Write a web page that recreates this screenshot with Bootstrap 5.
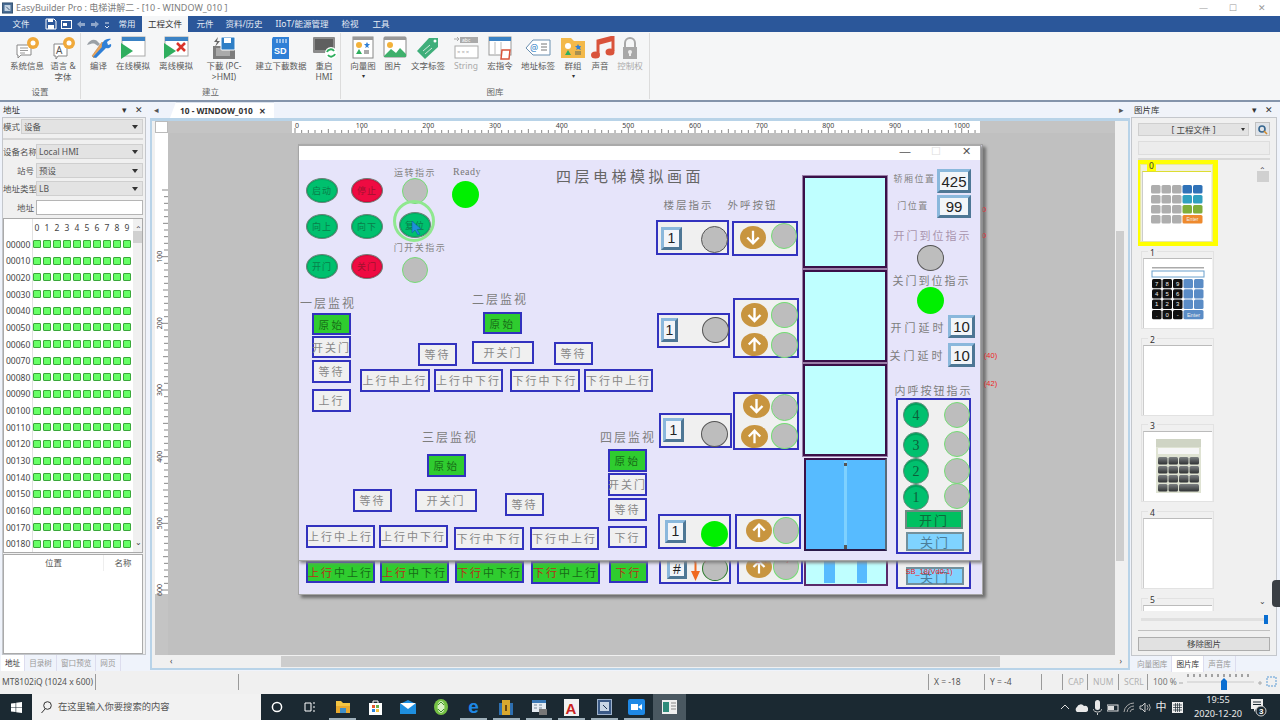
<!DOCTYPE html>
<html lang="zh">
<head>
<meta charset="utf-8">
<title>EasyBuilder Pro</title>
<link href="https://cdn.jsdelivr.net/npm/bootstrap@5.3.0/dist/css/bootstrap.min.css" rel="stylesheet">
<style>
html,body{margin:0;height:720px;overflow:hidden}
body{width:1280px;font:8.5px/11px "Noto Sans","Noto Sans CJK SC",sans-serif;color:#444;background:#f0f0f0}
.ttl{height:16px;background:#fff;color:#7d7d7d;font-size:9px;line-height:16px}
.ttl svg{margin:2px 3px 0 2px}
.wbtns span{width:29px;text-align:center;color:#999;font-size:9px}
.tabbar{height:16px;background:#2b579a;color:#e6ecf5;line-height:16px;font-size:8.5px}
.tabbar>div{text-align:center}
.tabbar .on{background:#f5f6f7;color:#333;width:46px}
.t42{width:42px}.t68{width:70px}.t30{width:30px}.t34{width:34px}.t44{width:44px}.t72{width:72px}.t24{width:24px}.t38{width:38px}
.qat{gap:4px;align-items:center;padding-left:3px}
.ribbon{height:70px;background:#f5f6f7;border-bottom:2px solid #8494ab;color:#5a5a5a}
.rgroup{border-right:1px solid #dcdcdc;height:66px;margin-top:1px}
.ritem{height:53px;text-align:center;flex:none;line-height:11px;padding-top:3px}
.ritem svg{display:block;margin:0 auto;height:24px;width:28px}
.rlabel{text-align:center;line-height:11px;color:#666;margin-bottom:5px}
.caret{color:#333;font-size:6px;line-height:10px}
.dis{color:#aaa}
.g1pad{padding-left:9px}
.w36{width:36px}.w35{width:35px}.w34{width:34px}.w52{width:52px}.w44{width:44px}.w70{width:70px}.w16{width:16px}.w38{width:38px}.w24{width:24px}.w46{width:46px}.w30{width:30px}.w32{width:32px}.w22{width:22px}
.gw81{width:81px}.gw260{width:260px}.gw309{width:309px}
.hmi-in{margin-left:-6px;width:28px}
.hmi-ic{margin-left:-6px!important}
.wspace{height:569px;background:#eff3fb}
.lpanel{width:148px;flex:none}
.phead{height:15px;line-height:15px;padding:0 5px 0 3px;color:#333;background:#f0f3f9}
.pbody{background:#f0f0f0;border:1px solid #c4c7cc;margin:0 2px}
.lbody{height:538px;padding:1px 2px 0 0;width:144px;margin:0 1px 0 2px}
.frow{height:15px;margin-bottom:3.7px;align-items:center}
.frow label{width:31px;text-align:right;margin-right:2px;flex:none;white-space:nowrap;color:#555}
.frow label.lab-s{width:16px}
.combo{flex:1;height:15px;background:#e3e3e3;border:1px solid #cfcfcf;line-height:13px;padding-left:2px;position:relative;color:#555}
.combo:after{content:"";position:absolute;right:4px;top:5px;border:3px solid transparent;border-top:4px solid #333}
.inp{background:#fff;border-color:#b5b5b5}
.inp:after{display:none}
.fsep{border-top:2px solid #d6d6d6;margin:0 0 4px}
.fr1{margin-bottom:4px}
.gridbox{height:335px;background:#fff;border:1px solid #aaa;margin-top:-1px;position:relative;overflow:hidden}
.gcol{width:130px;overflow:hidden;height:333px}
.ghead{height:17px;padding-left:28px;line-height:18px}
.ghead span{width:10px;text-align:center;flex:none;color:#444}
.grow{height:16.67px;align-items:center}
.grow span{width:29px;padding-left:2px;flex:none;color:#444}
.grow i{display:block;width:8px;height:8px;margin-right:2px;background:#66ff66;border:1px solid #3aa83a;border-radius:1px;flex:none}
.gline{width:1px;background:#e2e2e2;position:absolute;left:28px;top:0;bottom:0}
.gscroll{width:9px;background:#f0f0f0;position:relative;height:333px;margin-left:auto}
.gthumb{position:absolute;left:0;top:12px;width:9px;height:12px;background:#d0d0d0}
.tbbox{height:100px;background:#fff;border:1px solid #aaa;margin-top:1px;color:#555;text-align:center}
.tbhead{height:16px;line-height:16px}
.tbhead div:first-child{width:100px;border-right:1px solid #eee}
.tbhead div:last-child{width:38px}
.bots{height:16px;line-height:16px;color:#999;font-size:7.6px}
.bots span{padding:0 4px;border-right:1px solid #dde}
.bots .on{background:#fff;color:#333}
.lbots{padding-left:1px}
.rbots{padding-left:2px}
.cframe{width:980px;flex:none;margin-left:2px;height:569px}
.ctab{height:16px;line-height:16px;position:relative}
.ctab .doc{position:absolute;left:20px;top:0;width:104px;height:16px;background:#fff;font-size:8.3px;font-weight:700;color:#333;padding-left:10px;border-top:1px solid #dce3ee;clip-path:polygon(6px 0,100% 0,100% 100%,0 100%)}
.arrl{color:#555;margin-left:4px}
.arrr{position:absolute;right:6px;top:0;color:#555}
.cinner{border:2px solid #b8d3e8;border-top-width:3px;height:552px;background:#f0f0f0;padding-left:3px}
.rulrow{height:12px}
.corner{width:13px;background:#fff;border:1px solid #bbb}
.rulline{display:block;background:#c4c4c4;flex:none}
.hmi{width:947px;height:522px;background:#c0c0c0;position:relative;overflow:hidden;flex:none}
.vs{width:10px;background:#f0f0f0;height:522px;position:relative}
.vs i{position:absolute;left:1px;top:98px;width:8px;height:330px;background:#cdcdcd}
.hs{height:11px;margin:1px 0 0 13px;width:957px;background:#f0f0f0;position:relative}
.hs i{position:absolute;left:113px;top:0;width:719px;height:11px;background:#cdcdcd}
.hs .chev{top:1px;left:2px}
.hs .chev.rgt{left:auto;right:3px}
.rpanel{width:147px;flex:none;margin-left:1px}
.rbody{height:539px;margin:0 1px 0 0;padding:5px 6px 0 6px;position:relative}
.rcombo{height:13px;width:112px;text-align:center;background:#e3e3e3;border:1px solid #cfcfcf;line-height:11px;position:relative;font-size:8.5px}
.rcombo:after{content:"";position:absolute;right:3px;bottom:2px;border:2px solid transparent;border-top:3px solid #333}
.rbtn{width:15px;height:14px;margin:-1px 0 0 6px;background:#dfe3e8;border:1px solid #c0c0c0}
.rbox{height:14px;background:#ececec;border:1px solid #ddd;margin-top:5px}
.plist{height:453px;margin-top:3px;border-top:2px solid #d8d8d8;position:relative}
.listc{width:118px;height:451px;overflow:hidden}
.pit{width:73px;height:78px;margin:0 0 8.7px 3px;border:1px solid #e2e2e2;padding-left:1px;position:relative}
.pit span{position:absolute;left:6px;top:-4px;background:#f0f0f0;padding:0 2px;line-height:10px;color:#333}
.pth{position:absolute;left:1px;top:6px;width:69px;height:70px;background:#fff;border-top:1px solid #bbb;border-left:1px solid #ccc}
.pyel{width:80px;height:86px;background:#ffff00;margin-bottom:5px;padding:4px 0 0 2px}
.pyel .pit{margin:0;height:78px;border-color:#e8e8a0;background:#f0f0e0}
.pyel .pit span{background:#ffff00}
.pyel .pth{border-top:1px solid #dd3}
.vsb{width:12px;margin-left:auto;position:relative;background:#f0f0f0;margin-right:1px;height:451px}
.vsb i{position:absolute;left:0;top:11px;width:12px;height:11px;background:#d0d0d0}
.chev{position:absolute;left:2px;font-size:8px;line-height:8px;color:#444}
.chev.ctop{top:6px}.chev.cbot{bottom:6px}
.pslide{height:17px;position:relative}
.pslide:before{content:"";position:absolute;left:3px;right:3px;top:7px;height:3px;background:#e0e0e0}
.pslide i{position:absolute;right:2px;top:4px;width:4px;height:9px;background:#0a6ed1}
.rmv{height:14px;line-height:12px;text-align:center;margin-top:6px;background:#e1e1e1;border:1px solid #adadad;color:#444}
.rsep{border-top:1px solid #c0c0c0;margin-top:2px}
.handle{position:absolute;left:1272px;top:580px;width:8px;height:27px;background:#3b3f44;border-radius:4px 0 0 4px}
.stbar{height:23px;background:#f0f0f0;line-height:23px;color:#555;font-size:8.5px}
.stbar>div{border-right:1px solid #9a9a9a;height:16px;line-height:16px;margin-top:3px;flex:none;padding-left:5px;white-space:nowrap}
.sdim{color:#b0b0b0}
.zoomb{position:relative;width:92px;border:0!important;color:#777}
.zsvg{position:absolute;left:30px;top:-3px}
.s96{width:96px;padding-left:2px!important}.s143{width:143px}.s690{width:690px}.s56{width:56px}.s57{width:57px}.s21{width:21px}.s25{width:25px}.s31{width:31px}.s29{width:29px}
.taskbar{height:26px;background:#1b2932;color:#eaeaea;font-size:9px;line-height:12px}
.wlogo{width:32px;align-items:center;justify-content:center}
.sbox{width:229px;background:#f2f2f2;color:#555;font-size:9.3px;line-height:26px;padding-left:8px;gap:6px;align-items:center}
.tslot{width:32.7px;height:26px;flex:none;align-items:center;justify-content:center;position:relative}
.tslot.u:after{content:"";position:absolute;left:3px;right:3px;bottom:0;height:2px;background:#9fb0ba}
.tslot.act{background:#4a5861}
.elogo{color:#1e88e5;font:700 19px/20px "Liberation Sans",sans-serif}
.tray{margin-left:auto;align-items:center;padding-right:11px}
.tray>*{flex:none}
.trs{width:16px;display:flex;justify-content:center;align-items:center;font-size:11px}
.clock{width:62px;margin-left:2px;text-align:center;line-height:14px;font-size:9.2px}
.notif{width:20px}
.hwin{position:absolute;left:130px;top:11px;width:683px;background:#e6e4fa;border:1px solid #a5a5a5}
.hback{height:451px;box-shadow:3px 3px 3px #6f6f6f;width:685px}
.hfront{height:417px;box-shadow:2px 2px 3px #808080;border-top:2px solid #aaa}
.hbar{height:14px;background:#fff}
.a{position:absolute;display:flex;align-items:center;justify-content:center;white-space:nowrap;font-family:"Noto Sans CJK SC","Noto Sans",sans-serif;color:#7d7d7d}
.mon{background:#f0f0f0;border:2px solid #3232be;font-size:11px;letter-spacing:2px;color:#888}
.mong{background:#2fcc2f;color:#176b17;letter-spacing:2.5px;font-size:10.5px}
.mong2{background:#2fcc2f;color:#176b17}
.bt{color:#b5321a}
.oval{border-radius:50%;font-size:9px;letter-spacing:1px;border:1px solid #6f7f78;box-shadow:inset 0 0 0 1px rgba(0,0,0,.12)}
.og{background:#00c06e;color:#0a7d4a}
.or{background:#ef0b42;color:#a0122e}
.lamp{border-radius:50%;background:#bdbdbd;border:1px solid #75dc75}
.lampd{border-color:#555}
.lampon{background:#00f000;border:0}
.fbox{background:#f0f0f0;border:2px solid #3232be}
.dbox{background:#f2f5f9;border:3px solid;border-color:#8ab8dc #4e7795 #4e7795 #8ab8dc;color:#222;font-family:"Liberation Sans",sans-serif;font-size:14px}
.big{font-size:15px}
.orb{background:#c8953f;border-radius:50%}
.cell{background:#bfffff;border:2px solid #3a1048;outline:1px solid #9a7fa8}
.back-cell{background:#bfffff;border:2px solid #5a2a6a}
.back-bar{background:#57bbff}
.tg{font-size:15px;letter-spacing:3.5px;color:#666}
.t12{font-size:12px;letter-spacing:2px}
.t9{font-size:9px;letter-spacing:1.5px;color:#858585}
.t10{font-size:10.5px;letter-spacing:2px}
.t11{font-size:11px;letter-spacing:2px}
.t11x{font-size:11px;letter-spacing:3px}
.pur{color:#a893ac}
.ready{font-family:"Liberation Serif",serif;font-size:10px;letter-spacing:.5px;color:#777}
.cbtn{border-radius:50%;background:#00c06e;border:1px solid #5c8a76;color:#0d5e3a;font-family:"Liberation Serif",serif;font-size:14px;box-shadow:inset 0 2px 0 rgba(0,0,0,.15)}
.pgreen{background:#00c060;border:2px solid #6c8a80;color:#0d6a3c;font-size:13px;letter-spacing:2px}
.pblue{background:#7fd3ff;border:2px solid #72909c;color:#4b7d99;font-size:13px;letter-spacing:2px}
.red{color:#e22;font-size:7.5px;font-family:"Liberation Sans",sans-serif}
.ring{border-radius:50%;border:3px solid #8fe88f;background:transparent}
.blue{background:#57bbff;border-top:2px solid #3a1048;border-left:2px solid #3a1048;border-right:2px solid #5a6a7a;border-bottom:2px solid #2a1a48}
.gapb{background:#7ed1ff}
.cdot{background:#555}
.wctl{font-size:11px;color:#555;font-family:"Liberation Sans",sans-serif}
.wdim{color:#ddd}
</style>
</head>
<body>
<div class="ttl d-flex">
  <svg width="11" height="12" viewBox="0 0 13 13"><rect x=".5" y=".5" width="12" height="12" fill="#4a6d94" stroke="#2b4a6b"/><rect x="3" y="3" width="7" height="7" fill="#c8d6e5"/><path d="M5 5l4 4" stroke="#2b4a6b"/></svg>
  <span>EasyBuilder Pro : 电梯讲解二 - [10 - WINDOW_010 ]</span>
  <div class="wbtns ms-auto d-flex me-1"><span>—</span><span>☐</span><span>✕</span></div>
</div>
<div class="tabbar d-flex">
  <div class="t42">文件</div>
  <div class="t68 d-flex qat">
    <svg width="12" height="12" viewBox="0 0 12 12"><path d="M1 1h8l2 2v8H1z" fill="none" stroke="#fff"/><path d="M3 1h5v3H3zM3 7h6v4H3z" fill="#fff"/></svg>
    <svg width="11" height="11" viewBox="0 0 11 11"><rect x=".5" y="1.5" width="10" height="8" fill="none" stroke="#fff"/><path d="M2 4h4v3H2z" fill="#fff"/></svg>
    <svg width="10" height="10" viewBox="0 0 10 10"><path d="M1 5l4-3v2h4v3H5v2z" fill="#8ea6c9"/></svg>
    <svg width="10" height="10" viewBox="0 0 10 10"><path d="M9 5L5 2v2H1v3h4v2z" fill="#8ea6c9"/></svg>
    <svg width="6" height="10" viewBox="0 0 6 10"><path d="M1 4h4M1 7l2 2 2-2" stroke="#dfe6f0" fill="none"/></svg>
  </div>
  <div class="t30">常用</div><div class="on">工程文件</div><div class="t34">元件</div><div class="t44">资料/历史</div><div class="t72">IIoT/能源管理</div><div class="t24">检视</div><div class="t38">工具</div>
</div>
<div class="ribbon d-flex">
  <div class="rgroup gw81 d-flex flex-column">
    <div class="d-flex g1pad">
      <div class="ritem w36"><svg viewBox="0 0 28 24"><path d="M4 9h14v10H8l-3 3v-3H4z" fill="#fff" stroke="#888"/><path d="M7 12h8M7 14.5h8M7 17h5" stroke="#999"/><circle cx="20" cy="7" r="6" fill="#f0a93a"/><circle cx="20" cy="7" r="2.5" fill="#fff"/></svg>系统信息</div>
      <div class="ritem w36"><svg viewBox="0 0 28 24"><path d="M5 8h13v12H9l-2 3v-3H5z" fill="#fff" stroke="#888"/><text x="7" y="18" font-size="10" fill="#555">A</text><circle cx="20" cy="7" r="6" fill="#f0a93a"/><circle cx="20" cy="7" r="2.5" fill="#fff"/></svg>语言 &amp;<br>字体</div>
    </div>
    <div class="rlabel mt-auto">设置</div>
  </div>
  <div class="rgroup gw260 d-flex flex-column">
    <div class="d-flex">
      <div class="ritem w35"><svg viewBox="0 0 28 24"><path d="M7 20L17 6l2 2L9 22z" fill="#e8a55d" stroke="#b5793a" stroke-width=".5"/><path d="M2 9c2-5 8-7 11-3l2 2-2 2-3-2c-2-1-4 0-8 1z" fill="#9aa0a6"/><path d="M26 3l-4 3 1 3 3-1c1 3-2 5-5 4L11 22l-3-1 9-10c-1-4 3-9 9-8z" fill="#2f7fd6"/></svg>编译</div>
      <div class="ritem w34"><svg viewBox="0 0 28 24"><rect x="3" y="1" width="23" height="19" fill="#fff" stroke="#aaa"/><rect x="3" y="1" width="23" height="4" fill="#3b82c4"/><path d="M2 7l12 8-12 8z" fill="#2fae5e"/></svg>在线模拟</div>
      <div class="ritem w52"><svg viewBox="0 0 28 24"><rect x="3" y="1" width="23" height="19" fill="#fff" stroke="#aaa"/><rect x="3" y="1" width="23" height="4" fill="#3b82c4"/><path d="M2 7l12 8-12 8z" fill="#2fae5e"/><path d="M15 7l8 8M23 7l-8 8" stroke="#d9342b" stroke-width="2.5"/></svg>离线模拟</div>
      <div class="ritem w44"><svg viewBox="0 0 28 24"><rect x="3" y="10" width="22" height="13" fill="#7d7d7d"/><rect x="6" y="12" width="14" height="8" fill="#aaa"/><rect x="11" y="1" width="14" height="13" rx="1" fill="#2f7fc6" stroke="#fff"/><rect x="14" y="2" width="7" height="5" fill="#fff"/><path d="M8 1L4 6h3l-2 5 5-6H7z" fill="#666"/></svg>下載 (PC-<br>&gt;HMI)</div>
      <div class="ritem w70"><svg viewBox="0 0 28 24"><path d="M6 1h16v22H5V3z" fill="#2f7fd6"/><path d="M10 3v4M13 3v4M16 3v4M19 3v4" stroke="#fff"/><text x="7" y="18" font-size="9" font-weight="700" fill="#fff" font-family="Liberation Sans">SD</text></svg>建立下載数据</div>
      <div class="ritem w16"><svg class="hmi-ic" viewBox="0 0 28 24"><rect x="3" y="1" width="22" height="16" rx="1" fill="#8b8b8b"/><rect x="5" y="3" width="18" height="11" fill="#5f5f5f"/><circle cx="21" cy="17" r="6" fill="#fff"/><path d="M17 16a4 4 0 017-1M25 18a4 4 0 01-7 1" stroke="#2fae5e" stroke-width="2" fill="none"/></svg><div class="hmi-in">重启<br>HMI</div></div>
    </div>
    <div class="rlabel mt-auto">建立</div>
  </div>
  <div class="rgroup gw309 d-flex flex-column">
    <div class="d-flex ps-1">
      <div class="ritem w36"><svg viewBox="0 0 28 24"><rect x="4" y="1" width="20" height="21" fill="#fff" stroke="#888"/><rect x="4" y="1" width="20" height="3" fill="#999"/><circle cx="10" cy="9" r="3" fill="#f3b23a"/><path d="M18 6l1 2h2l-2 2 1 2-2-1-2 1 1-2-2-2h2z" fill="#2f7fd6"/><path d="M10 13l3 5H7z" fill="#2fae5e"/><rect x="15" y="14" width="5" height="4" fill="#aaa"/></svg>向量图<div class="caret">▾</div></div>
      <div class="ritem w24"><svg viewBox="0 0 28 24"><rect x="3" y="1" width="22" height="20" rx="1" fill="#fff" stroke="#888"/><rect x="3" y="1" width="22" height="3" fill="#999"/><circle cx="9" cy="9" r="3" fill="#f3b23a"/><path d="M3 20l7-7 5 4 4-5 6 6v3H3z" fill="#3fb06c"/></svg>图片</div>
      <div class="ritem w46"><svg viewBox="0 0 28 24"><path d="M15 2h9v9L11 23 3 15z" fill="#3fae7a"/><circle cx="21" cy="5" r="1.5" fill="#fff"/><path d="M9 15l7-6M11 18l7-6" stroke="#cfe9da"/></svg>文字标签</div>
      <div class="ritem w30 dis"><svg viewBox="0 0 28 24"><path d="M2 3h5M5 1l2 2-2 2" stroke="#aaa" fill="none"/><rect x="8" y="1" width="18" height="6" fill="#aaa"/><text x="10" y="6" font-size="5" fill="#fff">abc</text><rect x="3" y="10" width="23" height="12" fill="#fff" stroke="#aaa"/><text x="5" y="18" font-size="6" fill="#aaa" letter-spacing="1">×××</text></svg>String</div>
      <div class="ritem w38"><svg viewBox="0 0 28 24"><rect x="3" y="1" width="22" height="18" fill="#fff" stroke="#999"/><rect x="3" y="1" width="22" height="4" fill="#3b82c4"/><path d="M9 6v12M15 6v12" stroke="#bbb"/><path d="M16 14h8l-1 9h-8z" fill="#fff" stroke="#d9543b" stroke-width="1.5"/></svg>宏指令</div>
      <div class="ritem w38"><svg viewBox="0 0 28 24"><path d="M9 4h17v15H9l-7-7z" fill="#fff" stroke="#6a8fb0"/><text x="6" y="15" font-size="9" fill="#2f7fc6">@</text><path d="M17 8h6M17 11h6M17 14h6" stroke="#777"/></svg>地址标签</div>
      <div class="ritem w32"><svg viewBox="0 0 28 24"><path d="M2 2h10l3 3h11v17H2z" fill="#f3b94a"/><circle cx="9" cy="10" r="3" fill="#fff"/><path d="M19 8l1 2h2l-1 2 1 2-3-1-2 1 1-2-2-2h2z" fill="#2f7fd6"/><path d="M9 14l3 5H6z" fill="#2fae5e"/><rect x="16" y="15" width="6" height="4" fill="#a88f4f"/></svg>群组<div class="caret">▾</div></div>
      <div class="ritem w22"><svg viewBox="0 0 28 24"><path d="M9 18V5l15-4v14" fill="none" stroke="#d9533b" stroke-width="3"/><ellipse cx="6.5" cy="19" rx="4.5" ry="3.6" fill="#d9533b"/><ellipse cx="21" cy="16" rx="4.5" ry="3.6" fill="#d9533b"/><path d="M9 5l15-4v4L9 9z" fill="#d9533b"/></svg>声音</div>
      <div class="ritem w38 dis"><svg viewBox="0 0 28 24"><path d="M9 12V7a5 5 0 0110 0v5" fill="none" stroke="#a8a8a8" stroke-width="2"/><rect x="7" y="11" width="14" height="12" fill="#a8a8a8"/><circle cx="14" cy="16" r="2" fill="#eee"/><rect x="13" y="16" width="2" height="4" fill="#eee"/></svg>控制权</div>
    </div>
    <div class="rlabel mt-auto">图库</div>
  </div>
</div>
<div class="wspace d-flex position-relative">
  <div class="lpanel">
    <div class="phead d-flex align-items-center"><span>地址</span><span class="ms-auto me-2">▾</span><span>✕</span></div>
    <div class="pbody lbody">
      <div class="d-flex frow fr1"><label class="lab-s">模式</label><div class="combo">设备</div></div>
      <div class="fsep"></div>
      <div class="d-flex frow"><label>设备名称</label><div class="combo">Local HMI</div></div>
      <div class="d-flex frow"><label>站号</label><div class="combo">预设</div></div>
      <div class="d-flex frow"><label>地址类型</label><div class="combo">LB</div></div>
      <div class="d-flex frow"><label>地址</label><div class="combo inp"></div></div>
      <div class="gridbox d-flex"><div class="gline"></div>
        <div class="gcol" id="grid"></div>
        <div class="gscroll"><span class="chev ctop">⌃</span><i class="gthumb"></i><span class="chev cbot">⌄</span></div>
      </div>
      <div class="tbbox"><div class="d-flex tbhead"><div>位置</div><div>名称</div></div></div>
    </div>
    <div class="bots d-flex lbots"><span class="on">地址</span><span>目录树</span><span>窗口预览</span><span>网页</span></div>
  </div>
  <div class="cframe">
    <div class="ctab"><span class="arrl">◂</span><div class="doc d-flex justify-content-between"><span>10 - WINDOW_010</span><span class="me-2">✕</span></div><span class="arrr">▸</span></div>
    <div class="cinner">
      <div class="d-flex rulrow"><div class="corner"></div><svg id="rtop" width="947" height="12" class="rulline"></svg></div>
      <div class="d-flex">
        <svg id="rleft" width="13" height="522" class="rulline"></svg>
        <div class="hmi" id="hmi"></div>
        <div class="vs"><i></i></div>
      </div>
      <div class="hs"><span class="chev">‹</span><i></i><span class="chev rgt">›</span></div>
    </div>
  </div>
  <div class="rpanel">
    <div class="phead d-flex align-items-center"><span>图片库</span><span class="ms-auto me-2">▾</span><span>✕</span></div>
    <div class="pbody rbody">
      <div class="d-flex"><div class="rcombo">[ 工程文件 ]</div><div class="rbtn"><svg width="13" height="12" viewBox="0 0 13 12"><circle cx="6" cy="5" r="3" fill="none" stroke="#36668f" stroke-width="1.6"/><path d="M8 7l3 3" stroke="#d08a2e" stroke-width="1.6"/></svg></div></div>
      <div class="rbox"></div>
      <div class="plist d-flex">
        <div class="listc">
          <div class="pyel"><div class="pit"><span>0</span><div class="pth"><svg width="67" height="68" viewBox="0 0 67 68" id="k0"></svg></div></div></div>
          <div class="pit"><span>1</span><div class="pth"><svg width="67" height="68" viewBox="0 0 67 68" id="k1"></svg></div></div>
          <div class="pit"><span>2</span><div class="pth"></div></div>
          <div class="pit"><span>3</span><div class="pth"><svg width="67" height="68" viewBox="0 0 67 68" id="k3"></svg></div></div>
          <div class="pit"><span>4</span><div class="pth"></div></div>
          <div class="pit"><span>5</span><div class="pth"></div></div>
        </div>
        <div class="vsb"><span class="chev ctop">⌃</span><i></i><span class="chev cbot">⌄</span></div>
      </div>
      <div class="pslide"><i></i></div>
      <div class="rsep"></div>
      <div class="rmv">移除图片</div>
    </div>
    <div class="bots d-flex rbots"><span>向量图库</span><span class="on">图片库</span><span>声音库</span></div>
  </div>
</div>
<div class="stbar d-flex">
  <div class="s96">MT8102iQ (1024 x 600)</div>
  <div class="s143"></div>
  <div class="s690"></div>
  <div class="s56">X = -18</div>
  <div class="s57">Y = -4</div>
  <div class="s21"></div>
  <div class="s25 sdim">CAP</div>
  <div class="s31 sdim">NUM</div>
  <div class="s29 sdim">SCRL</div>
  <div class="zoomb">100 %
    <svg class="zsvg" width="100" height="22" viewBox="0 0 100 22"><path d="M1 12h4" stroke="#aaa"/><rect x="9" y="10" width="67" height="2" fill="#ddd"/><path d="M10 3v3M16 3v3M22 3v3M28 3v3M34 3v3M40 3v3M46 3v3M52 3v3M58 3v3M64 3v3M70 3v3" stroke="#555"/><path d="M43 19v-9l3-3 3 3v9z" fill="#0a6ed1"/><path d="M80 12h4M82 10v4" stroke="#aaa"/><rect x="89" y="6" width="9" height="9" fill="none" stroke="#5a9bd5" stroke-dasharray="2 1"/></svg>
  </div>
</div>
<div class="taskbar d-flex">
  <div class="wlogo d-flex"><svg width="11" height="11" viewBox="0 0 11 11"><path d="M0 1.6l4.6-.7v4.3H0zM5.2.8L11 0v5.2H5.2zM0 5.8h4.6v4.3L0 9.4zM5.2 5.8H11V11l-5.8-.8z" fill="#fff"/></svg></div>
  <div class="sbox d-flex"><svg width="12" height="14" viewBox="0 0 12 14"><circle cx="7.500" cy="5.500" r="3.800" fill="none" stroke="#333"/><path d="M5 9L1.500 13" stroke="#333"/></svg><span>在这里输入你要搜索的内容</span></div>
  <div class="tslot d-flex"><svg width="12" height="12"><circle cx="6" cy="6" r="4.6" fill="none" stroke="#fff" stroke-width="1.5"/></svg></div>
  <div class="tslot d-flex"><svg width="12" height="12" viewBox="0 0 12 12"><path d="M1 2h6v8H1z" fill="none" stroke="#fff"/><path d="M9 2h2M9 6h2M9 10h2" stroke="#fff"/></svg></div>
  <div class="tslot d-flex u"><svg width="16" height="14" viewBox="0 0 16 14"><path d="M1 1h5l2 2h7v10H1z" fill="#f4c542"/><rect x="1" y="6" width="14" height="7" fill="#e8a92e"/><rect x="5" y="8" width="6" height="5" fill="#3f8fc9"/></svg></div>
  <div class="tslot d-flex"><svg width="15" height="16" viewBox="0 0 15 16"><path d="M1 4h13v12H1z" fill="#fff"/><path d="M5 4V2h5v2" fill="none" stroke="#fff"/><rect x="4" y="6" width="3" height="3" fill="#e4572e"/><rect x="8" y="6" width="3" height="3" fill="#6ab04c"/><rect x="4" y="10" width="3" height="3" fill="#2e86de"/><rect x="8" y="10" width="3" height="3" fill="#f6c23e"/></svg></div>
  <div class="tslot d-flex"><svg width="16" height="14" viewBox="0 0 16 14"><path d="M0 4l8-4 8 4v10H0z" fill="#1e8fe0"/><path d="M0 3l8 6 8-6" fill="#fff"/></svg></div>
  <div class="tslot d-flex"><svg width="14" height="16" viewBox="0 0 14 16"><ellipse cx="7" cy="8" rx="7" ry="8" fill="#74c043"/><ellipse cx="7" cy="8" rx="3.5" ry="6" fill="#d8f0c4"/><path d="M4 6l3-3 3 3M4 10l3 3 3-3" stroke="#3f8f2a" fill="none"/></svg></div>
  <div class="tslot d-flex u"><span class="elogo">e</span></div>
  <div class="tslot d-flex u"><svg width="16" height="16" viewBox="0 0 16 16"><rect x="1" y="4" width="14" height="12" fill="#2e6fb0"/><rect x="4" y="1" width="8" height="15" fill="#d9a82e"/><rect x="7" y="6" width="2" height="6" fill="#6b4a12"/></svg></div>
  <div class="tslot d-flex u"><svg width="16" height="16" viewBox="0 0 16 16"><rect x="1" y="1" width="14" height="12" fill="#e6ecf2"/><rect x="1" y="1" width="14" height="3" fill="#3a78b5"/><path d="M3 6h3M3 9h3M8 6h3M8 9h3" stroke="#789"/><rect x="8" y="10" width="8" height="6" fill="#777"/></svg></div>
  <div class="tslot d-flex u"><svg width="15" height="17" viewBox="0 0 15 17"><rect width="15" height="17" fill="#f2f2f2"/><text x="1.5" y="14.5" font-size="15" font-weight="700" fill="#c9231e" font-family="Liberation Sans">A</text></svg></div>
  <div class="tslot d-flex u"><svg width="15" height="16" viewBox="0 0 15 16"><rect x=".5" y=".5" width="14" height="15" fill="#3b5a86" stroke="#9fb3cc"/><rect x="3" y="3" width="9" height="9" fill="#c8d6e5"/><path d="M6 6l4 4" stroke="#1f3554"/></svg></div>
  <div class="tslot d-flex u"><svg width="17" height="16" viewBox="0 0 17 16"><rect width="17" height="16" rx="2" fill="#1e88e5"/><rect x="3" y="5" width="7" height="6" fill="#fff"/><path d="M10 8l4-3v6z" fill="#fff"/></svg></div>
  <div class="tslot d-flex act"><svg width="15" height="14" viewBox="0 0 15 14"><rect width="15" height="14" fill="#f0f0f0"/><rect x="1" y="2" width="6" height="10" fill="#2e8b7a"/><path d="M9 3h5M9 6h5M9 9h5" stroke="#888"/></svg></div>
  <div class="tray d-flex">
    <div class="trs"><svg width="10" height="8" viewBox="0 0 10 8"><path d="M1 6l4-4 4 4" fill="none" stroke="#ddd"/></svg></div>
    <div class="trs"><svg width="14" height="9" viewBox="0 0 14 9"><path d="M3 9a3 3 0 010-5 4 4 0 017-1 3 3 0 012 6z" fill="#e8e8e8"/></svg></div>
    <div class="trs"><svg width="9" height="15" viewBox="0 0 9 15"><rect x="2" y="0" width="5" height="10" rx="2.5" fill="#e8e8e8"/><path d="M0 9c1 4 8 4 9 0M4.500 13v2" stroke="#ccc" fill="none"/></svg></div>
    <div class="trs"><svg width="12" height="9" viewBox="0 0 12 9"><rect y="2" width="11" height="6" fill="none" stroke="#ddd"/><rect x="1" y="3" width="6" height="4" fill="#ddd"/></svg></div>
    <div class="trs"><svg width="12" height="10" viewBox="0 0 12 10"><path d="M1 10a10 10 0 0110-9M4 10a7 7 0 017-6M7 10a4 4 0 014-3" stroke="#aaa" fill="none"/></svg></div>
    <div class="trs"><svg width="13" height="11" viewBox="0 0 13 11"><path d="M1 4h2l3-3v9L3 7H1z" fill="none" stroke="#ccc"/><path d="M8 3a4 4 0 010 5M10 2a6 6 0 010 7" stroke="#aaa" fill="none"/></svg></div>
    <div class="trs">中</div>
    <div class="trs"><svg width="11" height="11" viewBox="0 0 11 11"><rect width="11" height="11" fill="#eee"/><path d="M1 3h9M1 5.500h9M1 8h9M3.500 1v9M5.500 1v9M7.500 1v9" stroke="#1b2932" stroke-width=".7"/></svg></div>
    <div class="clock">19:55<br>2020-12-20</div>
    <svg width="20" height="20" viewBox="0 0 20 20" class="notif"><path d="M2 2h12v10H7l-2 3v-3H2z" fill="#eee"/><path d="M4 5h8M4 7.500h8" stroke="#1b2932"/><circle cx="12" cy="14" r="5" fill="#1b2932" stroke="#ccc"/><text x="10" y="17" font-size="8" font-weight="700" fill="#fff" font-family="Liberation Sans">3</text></svg>
  </div>
</div>
<div class="handle"></div>
<script>
// address grid
var g=document.getElementById('grid'),h='<div class="d-flex ghead">';
for(var i=0;i<10;i++)h+='<span>'+i+'</span>';h+='</div>';
for(var r=0;r<19;r++){var n=String(r*10);while(n.length<5)n='0'+n;h+='<div class="d-flex grow"><span>'+n+'</span>';for(i=0;i<10;i++)h+='<i></i>';h+='</div>';}
g.innerHTML=h;
// rulers
var t='',k;
t+='<rect x="124" width="688" height="12" fill="#fff"/>';
for(k=0;k<=102;k++){var x=127+k*6.667,m=k%10==0;t+='<path d="M'+x+' '+(m?7:(k%5==0?8:9))+'V12" stroke="#555" stroke-width=".7"/>';if(m)t+='<text x="'+(x+(k?0:2))+'" y="6.500" font-size="7" text-anchor="middle" fill="#444">'+(k*10)+'</text>';}
document.getElementById('rtop').innerHTML=t;
t='<rect x="0" y="0" width="13" height="461" fill="#fff"/>';
for(k=0;k<=60;k++){var y=57+k*6.667,m=k%10==0;t+='<path d="M'+(m?7:(k%5==0?8:9))+' '+y+'H13" stroke="#555" stroke-width=".7"/>';if(m&&k)t+='<text transform="translate(6.500 '+y+') rotate(-90)" font-size="7" text-anchor="middle" fill="#444">'+(k*10)+'</text>';}
document.getElementById('rleft').innerHTML=t;
// keypads
function key(x,y,w,h,f,l,fs){var o='<rect x="'+x+'" y="'+y+'" width="'+w+'" height="'+h+'" rx="1.5" fill="'+f+'"/>';if(l)o+='<text x="'+(x+w/2)+'" y="'+(y+h/2+2)+'" font-size="'+(fs||6)+'" text-anchor="middle" fill="#eee" font-family="Liberation Sans">'+l+'</text>';return o;}
var s='',lb=['7','8','9','4','5','6','1','2','3','.','0','-'];
for(r=0;r<4;r++){for(i=0;i<3;i++)s+=key(8+i*10.5,13+r*10,9.5,8.5,'#aeaeae');}
s+=key(39.5,13,9.5,8.5,'#2f72b8')+key(50,13,9.5,8.5,'#2f72b8')+key(39.5,23,9.5,8.5,'#2fa0c0')+key(50,23,9.5,8.5,'#2fa0c0')+key(39.5,33,9.5,8.5,'#7fae3a')+key(50,33,9.5,8.5,'#7fae3a')+key(39.5,43,20,8.5,'#ee8a2e','Enter',5);
document.getElementById('k0').innerHTML=s;
s='<rect x="8" y="12" width="52" height="6" fill="#fff" stroke="#6aa0cc"/><rect x="8" y="8" width="52" height="1.500" fill="#aaa"/>';
for(r=0;r<4;r++){for(i=0;i<3;i++)s+=key(8+i*10.5,20+r*10.3,9.5,9.3,'#111',lb[r*3+i]);}
for(r=0;r<3;r++){s+=key(39.5,20+r*10.3,9.5,9.3,'#5a8cc6')+key(50,20+r*10.3,9.5,9.3,'#5a8cc6');}
s+=key(39.5,50.9,20,9.3,'#5a8cc6','Enter',5.5);
document.getElementById('k1').innerHTML=s;
s='<defs><linearGradient id="kg" x1="0" y1="0" x2="0" y2="1"><stop offset="0" stop-color="#7c8082"/><stop offset="1" stop-color="#2f3233"/></linearGradient></defs><rect x="12" y="7" width="45" height="54" fill="#dfe3d3"/><rect x="12" y="7" width="45" height="8" fill="#cfd4c4"/><rect x="14" y="16" width="41" height="6" fill="#f6f6f6"/>';
for(r=0;r<4;r++){for(i=0;i<4;i++){if(r==3&&i==3)continue;var w=(r==3&&i==2)?20:9.5;s+=key(14+i*10.5,25+r*9,w,7.5,'url(#kg)');}}
document.getElementById('k3').innerHTML=s;
// HMI canvas: items are placed by their screen position
var H=document.getElementById('hmi'),OX=168,OY=133;
function add(c,x,y,w,h,txt){var d=document.createElement('div');d.className='a '+c;d.style.left=(x-OX)+'px';d.style.top=(y-OY)+'px';d.style.width=w+'px';d.style.height=h+'px';if(txt)d.innerHTML=txt;H.appendChild(d);return d;}
function b(c,x0,y0,x1,y1,txt){return add(c,x0,y0,x1-x0,y1-y0,txt);}
function lbl(c,x0,x1,yc,txt){return add(c,x0,yc-9,x1-x0,18,txt);}
var AD='<svg width="100%" height="100%" viewBox="0 0 26 24"><path d="M13 5v13M7 12l6 6 6-6" fill="none" stroke="#fff" stroke-width="2.4"/></svg>';
var AU='<svg width="100%" height="100%" viewBox="0 0 26 24"><path d="M13 19V6M7 12l6-6 6 6" fill="none" stroke="#fff" stroke-width="2.4"/></svg>';
var w1=document.createElement('div');w1.className='hwin hback';H.appendChild(w1);
// window behind
[[306,561,375,583,'<span class="bt">上行</span>中上行'],[380,561,449,583,'<span class="bt">上行</span>中下行'],[455,561,524,583,'<span class="bt">下行</span>中下行'],[531,561,600,584,'<span class="bt">下行</span>中上行'],[609,561,648,583,'<span class="bt">下行</span>']].forEach(function(v){b('mon mong2',v[0],v[1],v[2],v[3],v[4]);});
b('fbox',659,545,731,584);b('dbox',667,559,687,579,'#');
b('',691,561,700,581,'<svg width="9" height="20" viewBox="0 0 9 20"><path d="M3.500 0h2v10H9l-4.500 10L0 10h3.500z" fill="#f06a20"/></svg>');
b('lamp',702,556,728,581).style.borderColor='#2a7a2a';b('fbox',737,545,803,584);
b('orb',746,556,772,578,AU);b('lamp',773,553,799,580);
b('back-cell',804,555,888,586);
b('back-bar',824,557,835,583);b('back-bar',857,557,867,583);
b('fbox',896,540,971,589);b('pblue',906,567,964,585,'关门');
b('red',906,565,952,577,'SB_18(Vd0:1)');
b('red',689,553,711,563,'(04)');b('red',745,553,790,563,'SB_8(Vd0:1)');
b('red',982,205,986,214,'0');b('red',982,231,986,240,'0');
b('red',982,351,999,360,'(40)');b('red',982,379,999,388,'(42)');
// front window
var w2=document.createElement('div');w2.className='hwin hfront';w2.innerHTML='<div class="hbar"></div>';H.appendChild(w2);
b('wctl',899,145,911,157,'—');b('wctl',930,145,941,157,'<span class="wdim">☐</span>');b('wctl',960,145,972,157,'✕');
// ovals
[['og','启动',306,178],['or','停止',351,178],['og','向上',306,214],['og','向下',351,214],['og','开门',306,254],['or','关门',351,254]].forEach(function(v){add('oval '+v[0],v[2],v[3],32,25,v[1]);});
add('oval og',399,212,32,26,'复位');
b('lamp',402,178,428,204);b('lamp',402,257,428,283);b('lamp lampon',452,181,479,208);
b('ring',393,200,435,242);
b('',411,221,423,235,'<svg width="12" height="14" viewBox="0 0 12 14"><path d="M1 0l9 8-4 .5L9 13l-2 1-3-5-3 3z" fill="#1e90d8" stroke="#0a5d9a" stroke-width=".5"/></svg>');
lbl('t9',394,436,172,'运转指示');lbl('ready',452,482,171,'Ready');lbl('t9',394,446,247,'门开关指示');
lbl('tg',557,703,175,'四层电梯模拟画面');
lbl('t12',300,356,302,'一层监视');lbl('t12',472,528,298,'二层监视');lbl('t12',422,478,436,'三层监视');lbl('t12',600,656,436,'四层监视');
[[312,313,351,335,'g'],[312,336,351,358,'开关门'],[312,360,351,383,'等待'],[312,389,351,412,'上行'],
 [483,312,522,334,'g'],[418,343,457,366,'等待'],[472,341,534,364,'开关门'],[554,342,593,365,'等待'],
 [360,369,430,392,'上行中上行'],[434,369,503,392,'上行中下行'],[510,369,580,392,'下行中下行'],[584,369,653,392,'下行中上行'],
 [427,454,466,477,'g'],[353,489,392,512,'等待'],[415,489,477,512,'开关门'],[505,493,544,516,'等待'],
 [306,525,375,548,'上行中上行'],[379,525,448,548,'上行中下行'],[454,527,524,550,'下行中下行'],[530,527,599,550,'下行中上行'],
 [608,449,647,472,'g'],[608,473,647,496,'开关门'],[608,498,647,521,'等待'],[608,526,647,548,'下行']].forEach(function(v){
  if(v[4]=='g')b('mon mong',v[0],v[1],v[2],v[3],'原始');else b('mon',v[0],v[1],v[2],v[3],v[4]);});
lbl('t10',663,714,204,'楼层指示');lbl('t10',727,778,204,'外呼按钮');
// floor boxes
[[656,220,729,255,661,227,682,250,701,226,728,253,0],[657,313,730,348,661,318,678,342,702,317,729,343,0],[659,413,732,448,663,418,684,442,701,421,728,447,0],[658,514,731,549,665,520,686,543,701,521,728,547,1]].forEach(function(v){
  b('fbox',v[0],v[1],v[2],v[3]);b('dbox',v[4],v[5],v[6],v[7],'1');b(v[12]?'lamp lampon':'lamp lampd',v[8],v[9],v[10],v[11]);});
// hall call boxes
b('fbox',732,221,798,256);b('orb',740,226,766,249,AD);b('lamp',771,223,797,249);
b('fbox',733,298,799,358);b('orb',741,303,768,327,AD);b('lamp',771,302,798,328);b('orb',741,333,768,356,AU);b('lamp',771,332,798,358);
b('fbox',733,392,799,450);b('orb',743,394,770,418,AD);b('lamp',771,394,798,421);b('orb',741,425,768,448,AU);b('lamp',771,423,798,449);
b('fbox',735,514,801,549);b('orb',746,519,772,542,AU);b('lamp',773,517,799,544);
// shaft
b('cell',803,176,887,268);b('cell',803,270,887,362);b('cell',803,364,887,456);
b('blue',804,458,887,551);b('gapb',844,461,847,549);b('cdot',844,463,847,466);b('cdot',844,545,847,549);
// right column
lbl('t9',893,936,178,'轿厢位置');lbl('t9',897,929,205,'门位置');
b('dbox big',937,169,971,193,'425');b('dbox big',937,195,971,218,'99');
lbl('t11 pur',893,972,235,'开门到位指示');b('lamp lampd',917,245,944,271);
lbl('t11',892,971,280,'关门到位指示');b('lamp lampon',917,287,944,314);
lbl('t11x',890,947,327,'开门延时');b('dbox big',948,315,975,338,'10');
lbl('t11x',889,946,355,'关门延时');b('dbox big',948,343,975,367,'10');
lbl('t11',894,973,390,'内呼按钮指示');
b('fbox',896,398,971,554);
[[402,'4'],[432,'3'],[458,'2'],[484,'1']].forEach(function(v){add('cbtn',903,v[0],26,26,v[1]);});
[402,431,458,483].forEach(function(y){add('lamp',944,y,26,26);});
b('pgreen',905,510,963,529,'开门');b('pblue',906,532,964,551,'关门');
</script>
</body>
</html>
